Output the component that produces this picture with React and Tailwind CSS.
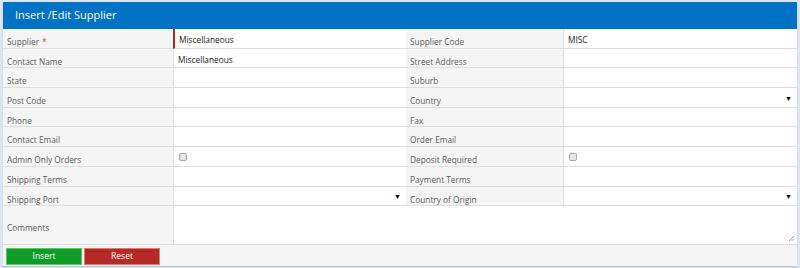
import { useState } from "react";

const rows = [
  ["Supplier", "text", "Miscellaneous", "Supplier Code", "text", "MISC", true],
  ["Contact Name", "text", "Miscellaneous", "Street Address", "text", ""],
  ["State", "text", "", "Suburb", "text", ""],
  ["Post Code", "text", "", "Country", "select", ""],
  ["Phone", "text", "", "Fax", "text", ""],
  ["Contact Email", "text", "", "Order Email", "text", ""],
  ["Admin Only Orders", "check", "", "Deposit Required", "check", ""],
  ["Shipping Terms", "text", "", "Payment Terms", "text", ""],
  ["Shipping Port", "select", "", "Country of Origin", "select", ""],
];

function Label({ children, required }) {
  return (
    <div className="flex items-start pt-[6px] pl-[4px] bg-[#f5f5f5] border-b border-[#dedede] text-[#5a5a5a] leading-[13px] h-[19.7px]">
      {children}
      {required && <span className="text-[#c0392b] ml-[3px]">*</span>}
    </div>
  );
}

function Field({ type, value, required }) {
  if (type === "check") {
    return (
      <div className="flex items-center pl-[5px] pt-[1px] bg-white border-b border-l border-[#dedede] h-[19.7px]">
        <span className="w-[8px] h-[8px] rounded-[2px] border border-[#a8a8a8] bg-[#e6e6e6]" />
      </div>
    );
  }
  if (type === "select") {
    return (
      <div className="flex items-center justify-end pr-[5px] pt-[2px] bg-white border-b border-l border-[#dedede] h-[19.7px]">
        <span className="text-[7px] text-black leading-none">▼</span>
      </div>
    );
  }
  return (
    <div
      className={
        "flex items-start pl-[4px] pt-[4px] bg-white border-b border-[#dedede] text-[#222] leading-[13px] h-[19.7px] " +
        (required ? "border-l-2 border-l-[#b22222]" : "border-l")
      }
    >
      {value}
    </div>
  );
}

export default function App() {
  const [busy] = useState(false);
  return (
    <div className="w-[800px] h-[268px] bg-[#dbe6f2] pt-[2px] pl-[3px] pr-[3px] font-['Open_Sans',sans-serif] text-[8.3px]">
      <div className="bg-white shadow-[0_1px_1px_rgba(0,0,0,0.15)]">
        <div className="h-[27px] bg-[#0072c6] text-white text-[11px] flex items-center pl-[12px] pb-[1px]">
          Insert /Edit Supplier
        </div>
        <div className="grid grid-cols-[170px_233px_157px_1fr]">
          {rows.map(([l1, t1, v1, l2, t2, v2, req]) => (
            <div key={l1} className="contents">
              <Label required={req}>{l1}</Label>
              <Field type={t1} value={v1} required={req} />
              <Label>{l2}</Label>
              <Field type={t2} value={v2} />
            </div>
          ))}
          <div className="flex items-center pl-[4px] pt-[6px] bg-[#f5f5f5] text-[#5a5a5a] h-[38.5px] border-b border-[#dedede]">
            Comments
          </div>
          <div className="col-span-3 relative bg-white border-b border-l border-[#dedede] h-[38.5px]">
            <svg
              className="absolute right-[2px] bottom-[2px]"
              width="7"
              height="7"
              viewBox="0 0 7 7"
            >
              <path d="M6 1 L1 6 M6 3.5 L3.5 6" stroke="#9a9a9a" strokeWidth="1" />
            </svg>
          </div>
        </div>
        <div className="flex gap-[2px] bg-[#f5f5f5] h-[21px] pt-[3px] pl-[3px] pb-[1px]">
          <button
            disabled={busy}
            className="w-[76px] h-[17px] bg-[#119c28] border border-[#5fc26d] text-white text-[8.5px] leading-none"
          >
            Insert
          </button>
          <button
            disabled={busy}
            className="w-[76px] h-[17px] bg-[#b52a25] border border-[#d97a76] text-white text-[8.5px] leading-none"
          >
            Reset
          </button>
        </div>
      </div>
    </div>
  );
}
